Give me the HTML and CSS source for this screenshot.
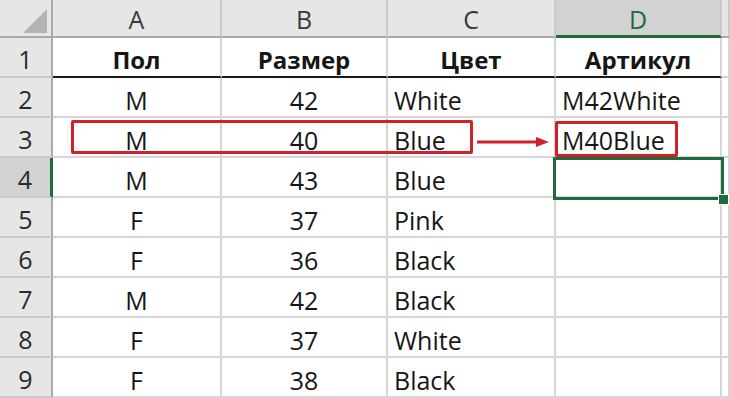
FILE: index.html
```html
<!DOCTYPE html>
<html lang="ru">
<head>
  <meta charset="UTF-8">
  <meta name="viewport" content="width=device-width, initial-scale=1.0">
  <title>Артикул</title>
  <link rel="stylesheet" href="styles.css">
</head>
<body>
  <div class="sheet">
    <div class="grid">
      <div class="corner"><span class="tri"></span></div>
      <div class="colhdr">A</div>
      <div class="colhdr">B</div>
      <div class="colhdr">C</div>
      <div class="colhdr active">D</div>
      <div class="colhdr"></div>

      <div class="rowhdr">1</div>
      <div class="cell center bold title">Пол</div>
      <div class="cell center bold title">Размер</div>
      <div class="cell center bold title">Цвет</div>
      <div class="cell center bold title">Артикул</div>
      <div class="cell"></div>

      <div class="rowhdr">2</div>
      <div class="cell center">M</div>
      <div class="cell center">42</div>
      <div class="cell">White</div>
      <div class="cell">M42White</div>
      <div class="cell"></div>

      <div class="rowhdr">3</div>
      <div class="cell center">M</div>
      <div class="cell center">40</div>
      <div class="cell">Blue</div>
      <div class="cell">M40Blue</div>
      <div class="cell"></div>

      <div class="rowhdr active">4</div>
      <div class="cell center">M</div>
      <div class="cell center">43</div>
      <div class="cell">Blue</div>
      <div class="cell"></div>
      <div class="cell"></div>

      <div class="rowhdr">5</div>
      <div class="cell center">F</div>
      <div class="cell center">37</div>
      <div class="cell">Pink</div>
      <div class="cell"></div>
      <div class="cell"></div>

      <div class="rowhdr">6</div>
      <div class="cell center">F</div>
      <div class="cell center">36</div>
      <div class="cell">Black</div>
      <div class="cell"></div>
      <div class="cell"></div>

      <div class="rowhdr">7</div>
      <div class="cell center">M</div>
      <div class="cell center">42</div>
      <div class="cell">Black</div>
      <div class="cell"></div>
      <div class="cell"></div>

      <div class="rowhdr">8</div>
      <div class="cell center">F</div>
      <div class="cell center">37</div>
      <div class="cell">White</div>
      <div class="cell"></div>
      <div class="cell"></div>

      <div class="rowhdr">9</div>
      <div class="cell center">F</div>
      <div class="cell center">38</div>
      <div class="cell">Black</div>
      <div class="cell"></div>
      <div class="cell"></div>
    </div>

    <!-- annotations on top of the sheet -->
    <div class="mark mark-row"></div>
    <svg class="arrow" width="74" height="12" viewBox="0 0 74 12">
      <line x1="0" y1="6" x2="62" y2="6" stroke="#d0202a" stroke-width="3"/>
      <polygon points="59,1 72,6 59,11" fill="#d0202a"/>
    </svg>
    <div class="mark mark-result"></div>
    <div class="selection"><span class="handle"></span></div>
  </div>
</body>
</html>
```

FILE: styles.css
```css
body {
  margin: 0;
  padding: 0;
  background-color: #fff;
  font-family: "Open Sans", "Noto Sans", sans-serif;
  overflow: hidden;
}

.sheet {
  position: relative;
  width: 730px;
  height: 398px;
}

.grid {
  display: grid;
  grid-template-columns: 53px 169px 166px 168px 166px 8px;
  grid-template-rows: 38px repeat(9, 40px);
}

.grid > div {
  box-sizing: border-box;
  display: flex;
  align-items: center;
  font-size: 25px;
  font-weight: 500;
  color: #161616;
  white-space: nowrap;
  overflow: hidden;
}

.corner {
  position: relative;
  background-color: #e6e6e6;
  border-right: 2px solid #a9a9a9;
  border-bottom: 2px solid #a9a9a9;
}

.tri {
  position: absolute;
  left: 23px;
  top: 9px;
  width: 0;
  height: 0;
  border-left: 24px solid transparent;
  border-bottom: 24px solid #b3b3b3;
}

.colhdr {
  justify-content: center;
  background-color: #e6e6e6;
  border-right: 2px solid #cacaca;
  border-bottom: 2px solid #a9a9a9;
  color: #3a3a3a !important;
  padding-top: 2px;
}

.colhdr.active {
  background-color: #d2d2d2;
  color: #1f6b3d !important;
  border-bottom: 3px solid #1f6b3d;
}

.rowhdr {
  justify-content: center;
  background-color: #e6e6e6;
  border-right: 2px solid #a9a9a9;
  border-bottom: 2px solid #cacaca;
  color: #2a2a2a !important;
  padding-top: 4px;
}

.rowhdr.active {
  background-color: #d2d2d2;
  border-right: 3px solid #1f6b3d;
}

.cell {
  padding: 5px 0 0 6px;
  border-right: 2px solid #d6d6d6;
  border-bottom: 2px solid #d6d6d6;
}

.center {
  justify-content: center;
  padding-left: 0;
}

.grid > .bold {
  font-weight: 700;
  font-size: 24px;
}

.title {
  border-bottom: 2px solid #1a1a1a !important;
}

.mark {
  position: absolute;
  box-sizing: border-box;
  border: 3px solid #d0202a;
  border-radius: 2px;
}

.mark-row {
  left: 71px;
  top: 120px;
  width: 402px;
  height: 34px;
}

.mark-result {
  left: 555px;
  top: 121px;
  width: 123px;
  height: 36px;
}

.arrow {
  position: absolute;
  left: 477px;
  top: 136px;
}

.selection {
  position: absolute;
  box-sizing: border-box;
  left: 553px;
  top: 157px;
  width: 171px;
  height: 43px;
  border: 3px solid #1f6b3d;
}

.handle {
  position: absolute;
  right: -8px;
  bottom: -8px;
  width: 9px;
  height: 9px;
  background-color: #1f6b3d;
  border: 1px solid #fff;
}
```
